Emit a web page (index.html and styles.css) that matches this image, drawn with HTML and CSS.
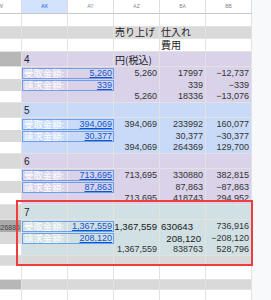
FILE: index.html
```html
<!DOCTYPE html>
<html lang="ja">
<head>
<meta charset="utf-8">
<link rel="stylesheet" href="styles.css">
</head>
<body>
<div class="sheet">
  <div class="row hdr">
    <div class="c h aw"><span>AW</span></div>
    <div class="c h sel">AX</div>
    <div class="c h">AY</div>
    <div class="c h">AZ</div>
    <div class="c h">BA</div>
    <div class="c h">BB</div>
    <div class="c fill"></div>
  </div>

  <div class="row r13">
    <div class="c wht"></div><div class="c wht"></div><div class="c wht"></div><div class="c wht"></div><div class="c wht"></div><div class="c wht"></div><div class="c fill"></div>
  </div>
  <div class="row r12">
    <div class="c gry"></div><div class="c gry"></div><div class="c gry"></div><div class="c gry t jp">売り上げ</div><div class="c gry t jp">仕入れ</div><div class="c gry"></div><div class="c fill"></div>
  </div>
  <div class="row r13">
    <div class="c wht"></div><div class="c wht"></div><div class="c wht"></div><div class="c wht"></div><div class="c wht t jp">費用</div><div class="c wht"></div><div class="c fill"></div>
  </div>

  <!-- group 4 -->
  <div class="row lab">
    <div class="c drk"></div><div class="c pur t gnum">4</div><div class="c pur"></div><div class="c pur t jp">円(税込)</div><div class="c pur"></div><div class="c pur"></div><div class="c fill"></div>
  </div>
  <div class="row r12">
    <div class="c wht"></div>
    <div class="boxcell pur"><div class="box"><span class="lbl jp">受取金額:</span><span class="val">5,260</span></div></div>
    <div class="c pur n">5,260</div><div class="c pur n">17997</div><div class="c pur n">−12,737</div><div class="c fill"></div>
  </div>
  <div class="row r12">
    <div class="c gry"></div>
    <div class="boxcell pur"><div class="box"><span class="lbl jp">請求金額:</span><span class="val">339</span></div></div>
    <div class="c pur n"></div><div class="c pur n">339</div><div class="c pur n">−339</div><div class="c fill"></div>
  </div>
  <div class="row r12">
    <div class="c wht"></div><div class="c pur"></div><div class="c pur"></div><div class="c pur n">5,260</div><div class="c pur n">18336</div><div class="c pur n">−13,076</div><div class="c fill"></div>
  </div>

  <!-- group 5 -->
  <div class="row lab">
    <div class="c gry"></div><div class="c blu t gnum">5</div><div class="c blu"></div><div class="c blu"></div><div class="c blu"></div><div class="c blu"></div><div class="c fill"></div>
  </div>
  <div class="row r12">
    <div class="c wht"></div>
    <div class="boxcell blu"><div class="box"><span class="lbl jp">受取金額:</span><span class="val">394,069</span></div></div>
    <div class="c blu n">394,069</div><div class="c blu n">233992</div><div class="c blu n">160,077</div><div class="c fill"></div>
  </div>
  <div class="row r12">
    <div class="c gry"></div>
    <div class="boxcell blu"><div class="box"><span class="lbl jp">請求金額:</span><span class="val">30,377</span></div></div>
    <div class="c blu n"></div><div class="c blu n">30,377</div><div class="c blu n">−30,377</div><div class="c fill"></div>
  </div>
  <div class="row r12">
    <div class="c wht"></div><div class="c blu"></div><div class="c blu"></div><div class="c blu n">394,069</div><div class="c blu n">264369</div><div class="c blu n">129,700</div><div class="c fill"></div>
  </div>

  <!-- group 6 -->
  <div class="row lab">
    <div class="c gry"></div><div class="c pur t gnum">6</div><div class="c pur"></div><div class="c pur"></div><div class="c pur"></div><div class="c pur"></div><div class="c fill"></div>
  </div>
  <div class="row r12">
    <div class="c wht"></div>
    <div class="boxcell pur"><div class="box"><span class="lbl jp">受取金額:</span><span class="val">713,695</span></div></div>
    <div class="c pur n">713,695</div><div class="c pur n">330880</div><div class="c pur n">382,815</div><div class="c fill"></div>
  </div>
  <div class="row r12">
    <div class="c gry"></div>
    <div class="boxcell pur"><div class="box"><span class="lbl jp">請求金額:</span><span class="val">87,863</span></div></div>
    <div class="c pur n"></div><div class="c pur n">87,863</div><div class="c pur n">−87,863</div><div class="c fill"></div>
  </div>
  <div class="row r12">
    <div class="c wht"></div><div class="c pur"></div><div class="c pur"></div><div class="c pur n">713,695</div><div class="c pur n">418743</div><div class="c pur n">294,952</div><div class="c fill"></div>
  </div>

  <!-- group 7 -->
  <div class="row lab">
    <div class="c gry"></div><div class="c tea t gnum">7</div><div class="c tea"></div><div class="c tea"></div><div class="c tea"></div><div class="c tea"></div><div class="c fill"></div>
  </div>
  <div class="row r12">
    <div class="c dk2 n small clip">826886</div>
    <div class="boxcell tea"><div class="box"><span class="lbl jp">受取金額:</span><span class="val">1,367,559</span></div></div>
    <div class="c tea n big">1,367,559</div><div class="c tea t big">630643</div><div class="c tea n">736,916</div><div class="c fill"></div>
  </div>
  <div class="row r12">
    <div class="c gry"></div>
    <div class="boxcell tea"><div class="box"><span class="lbl jp">請求金額:</span><span class="val">208,120</span></div></div>
    <div class="c tea n"></div><div class="c tea n big pr4">208,120</div><div class="c tea n">−208,120</div><div class="c fill"></div>
  </div>
  <div class="row r12">
    <div class="c wht"></div><div class="c tea"></div><div class="c tea"></div><div class="c tea n">1,367,559</div><div class="c tea n">838763</div><div class="c tea n">528,796</div><div class="c fill"></div>
  </div>

  <div class="row r10">
    <div class="c gry"></div><div class="c gry"></div><div class="c gry"></div><div class="c gry"></div><div class="c gry"></div><div class="c gry"></div><div class="c fill"></div>
  </div>
  <div class="row r14">
    <div class="c wht"></div><div class="c wht"></div><div class="c wht"></div><div class="c wht"></div><div class="c wht"></div><div class="c wht"></div><div class="c fill"></div>
  </div>
  <div class="row r10">
    <div class="c drk"></div><div class="c gry"></div><div class="c gry"></div><div class="c gry"></div><div class="c gry"></div><div class="c gry"></div><div class="c fill"></div>
  </div>
  <div class="row r14">
    <div class="c wht"></div><div class="c wht"></div><div class="c wht"></div><div class="c wht"></div><div class="c wht"></div><div class="c wht"></div><div class="c fill"></div>
  </div>

  <div class="mark"></div>
</div>
</body>
</html>
```

FILE: styles.css
```css
html, body {
  margin: 0;
  padding: 0;
  background: #ffffff;
  overflow: hidden;
}

.sheet {
  position: relative;
  width: 271px;
  height: 300px;
  overflow: hidden;
  font-family: "Liberation Sans", Arial, "Noto Sans CJK JP", sans-serif;
  font-size: 9px;
  color: #333333;
}

.row {
  display: grid;
  grid-template-columns: 22px 46px 46px 46px 46px 46px 19px;
}

.hdr { height: 14px; }
.r13 { height: 13px; }
.r12 { height: 12px; }
.r10 { height: 10px; }
.r14 { height: 14px; }
.lab { height: 15px; }

.c {
  box-sizing: border-box;
  border-right: 1px solid #e2e2e2;
  border-bottom: 1px solid #e2e2e2;
  display: flex;
  align-items: flex-end;
  white-space: nowrap;
  line-height: 1;
  padding-bottom: 1px;
}

.clip { overflow: hidden; }

.h {
  background: #ffffff;
  border-bottom: 1px solid #c7c7c7;
  border-right: 1px solid #dadce0;
  justify-content: center;
  align-items: center;
  padding: 0;
  font-size: 5px;
  color: #80868b;
  overflow: hidden;
}
.h.sel {
  background: #d3e3fd;
  color: #0b57d0;
}
.h.aw {
  justify-content: flex-start;
}
.h.aw span {
  margin-left: -5px;
}

.fill {
  background: #f8f9fa;
  border: none;
}

.wht { background: #ffffff; }
.gry { background: #d9d9d9; }
.drk { background: #b7b7b7; }
.dk2 { background: #a9a9a9; }
.pur { background: #d9d2e9; }
.blu { background: #c9daf8; }
.tea { background: #d0e0e3; }

.t {
  justify-content: flex-start;
  padding-left: 1px;
}
.n {
  justify-content: flex-end;
  padding-right: 2px;
}
.pr4 { padding-right: 4px; }

.jp {
  font-family: "Noto Sans CJK JP", "Liberation Sans", sans-serif;
  font-size: 10px;
  color: #222222;
}

.gnum {
  font-size: 10px;
  color: #222222;
  padding-left: 2px;
}

.big {
  font-size: 9.6px;
  color: #1a1a1a;
}
.small {
  font-size: 7px;
  color: #444444;
  padding-right: 1px;
}

.boxcell {
  grid-column: 2 / span 2;
  box-sizing: border-box;
  border-bottom: 1px solid #e2e2e2;
  padding-top: 1px;
}
.box {
  box-sizing: border-box;
  height: 100%;
  border: 1px solid #6d9eeb;
  display: flex;
  align-items: flex-end;
  line-height: 1;
}
.lbl {
  box-sizing: border-box;
  width: 45px;
  height: 100%;
  display: flex;
  align-items: center;
  padding-left: 1px;
  border-right: 1px solid rgba(255, 255, 255, 0.55);
  color: #ffffff;
  font-size: 9.4px;
  white-space: nowrap;
}
.val {
  flex: 1;
  text-align: right;
  padding-right: 1px;
  color: #1155cc;
  text-decoration: underline;
  font-size: 9px;
}

.mark {
  position: absolute;
  left: 16px;
  top: 200px;
  width: 237px;
  height: 66px;
  box-sizing: border-box;
  border: 2px solid #ee3d3d;
}
```
